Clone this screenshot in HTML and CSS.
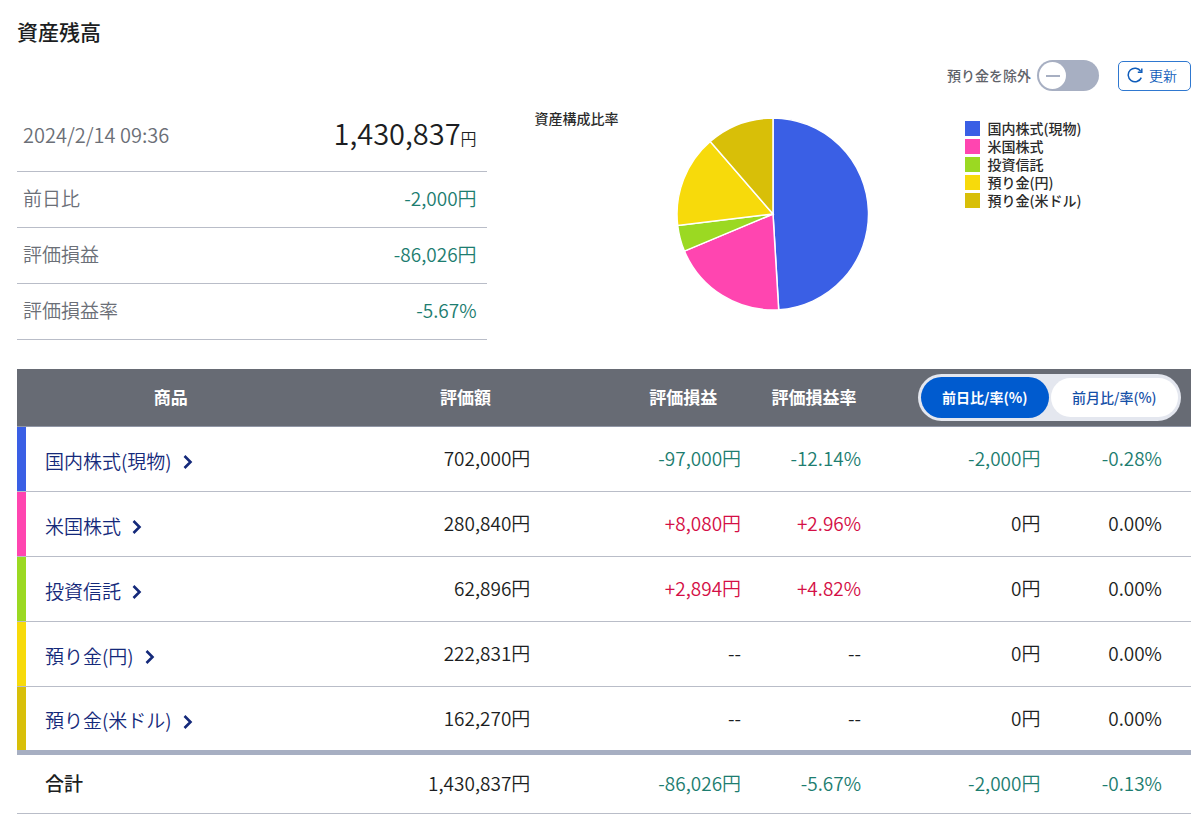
FILE: index.html
```
<!DOCTYPE html>
<html lang="ja">
<head>
<meta charset="utf-8">
<title>資産残高</title>
<meta name="viewport" content="width=device-width, initial-scale=1">
<link rel="stylesheet" href="styles.css">
</head>
<body>
<main class="page">
  <h1 class="page-title">資産残高</h1>

  <div class="toolbar">
    <label class="exclude" for="exclude-cash">預り金を除外</label>
    <input class="switch" type="checkbox" role="switch" id="exclude-cash">
    <button class="refresh" type="button">
      <svg class="refresh-icon" viewBox="0 0 16 16" aria-hidden="true">
        <path d="M13.8 4.4A6.8 6.8 0 1 0 14.3 10.6"/>
        <path d="M14.8 1.4V5.2H10.8"/>
      </svg>
      更新
    </button>
  </div>

  <section class="overview">
    <table class="summary">
      <tbody>
        <tr class="summary-total"><th scope="row">2024/2/14 09:36</th><td>1,430,837<span class="unit">円</span></td></tr>
        <tr><th scope="row">前日比</th><td class="minus">-2,000円</td></tr>
        <tr><th scope="row">評価損益</th><td class="minus">-86,026円</td></tr>
        <tr><th scope="row">評価損益率</th><td class="minus">-5.67%</td></tr>
      </tbody>
    </table>

    <figure class="chart">
      <figcaption class="chart-title">資産構成比率</figcaption>
      <svg class="pie" viewBox="-96 -96 192 192" role="img" aria-label="資産構成比率">
        <path class="fill-domestic" d="M0 0V-96A96 96 0 0 1 5.7 95.8Z"/>
        <path class="fill-us" d="M0 0L5.7 95.8A96 96 0 0 1 -88.6 37.1Z"/>
        <path class="fill-fund" d="M0 0L-88.6 37.1A96 96 0 0 1 -95.3 11.5Z"/>
        <path class="fill-yen" d="M0 0L-95.3 11.5A96 96 0 0 1 -62.8 -72.6Z"/>
        <path class="fill-usd" d="M0 0L-62.8 -72.6A96 96 0 0 1 0 -96Z"/>
      </svg>
      <ul class="legend">
        <li class="domestic">国内株式(現物)</li>
        <li class="us">米国株式</li>
        <li class="fund">投資信託</li>
        <li class="yen">預り金(円)</li>
        <li class="usd">預り金(米ドル)</li>
      </ul>
    </figure>
  </section>

  <table class="holdings">
    <colgroup>
      <col class="col-name"><col class="col-value"><col class="col-gain"><col class="col-rate"><col class="col-change"><col class="col-change-rate">
    </colgroup>
    <thead>
      <tr>
        <th scope="col">商品</th>
        <th scope="col">評価額</th>
        <th scope="col">評価損益</th>
        <th scope="col">評価損益率</th>
        <th scope="colgroup" colspan="2" class="period-cell">
          <div class="period">
            <button class="period-option selected" type="button" aria-pressed="true">前日比/率(%)</button>
            <button class="period-option" type="button" aria-pressed="false">前月比/率(%)</button>
          </div>
        </th>
      </tr>
    </thead>
    <tbody>
      <tr class="domestic">
        <th scope="row"><a class="product" href="#">国内株式(現物)<svg class="chevron" viewBox="0 0 10 14" aria-hidden="true"><path d="M1.5 1L7.5 7L1.5 13"/></svg></a></th>
        <td>702,000円</td><td class="minus">-97,000円</td><td class="minus">-12.14%</td><td class="minus">-2,000円</td><td class="minus">-0.28%</td>
      </tr>
      <tr class="us">
        <th scope="row"><a class="product" href="#">米国株式<svg class="chevron" viewBox="0 0 10 14" aria-hidden="true"><path d="M1.5 1L7.5 7L1.5 13"/></svg></a></th>
        <td>280,840円</td><td class="plus">+8,080円</td><td class="plus">+2.96%</td><td>0円</td><td>0.00%</td>
      </tr>
      <tr class="fund">
        <th scope="row"><a class="product" href="#">投資信託<svg class="chevron" viewBox="0 0 10 14" aria-hidden="true"><path d="M1.5 1L7.5 7L1.5 13"/></svg></a></th>
        <td>62,896円</td><td class="plus">+2,894円</td><td class="plus">+4.82%</td><td>0円</td><td>0.00%</td>
      </tr>
      <tr class="yen">
        <th scope="row"><a class="product" href="#">預り金(円)<svg class="chevron" viewBox="0 0 10 14" aria-hidden="true"><path d="M1.5 1L7.5 7L1.5 13"/></svg></a></th>
        <td>222,831円</td><td>--</td><td>--</td><td>0円</td><td>0.00%</td>
      </tr>
      <tr class="usd">
        <th scope="row"><a class="product" href="#">預り金(米ドル)<svg class="chevron" viewBox="0 0 10 14" aria-hidden="true"><path d="M1.5 1L7.5 7L1.5 13"/></svg></a></th>
        <td>162,270円</td><td>--</td><td>--</td><td>0円</td><td>0.00%</td>
      </tr>
    </tbody>
    <tfoot>
      <tr>
        <th scope="row">合計</th>
        <td>1,430,837円</td><td class="minus">-86,026円</td><td class="minus">-5.67%</td><td class="minus">-2,000円</td><td class="minus">-0.13%</td>
      </tr>
    </tfoot>
  </table>
</main>
</body>
</html>
```
FILE: styles.css
```
:root {
  --text: #1c1e22;
  --muted: #6b6f77;
  --line: #b9bdc8;
  --slate: #a7afc2;
  --green: #1d7d70;
  --red: #d40f46;
  --blue: #005bcf;
  --navy: #14297a;
  --domestic: #3a5fe5;
  --us: #ff45b0;
  --fund: #9bd922;
  --yen: #f7da0b;
  --usd: #d8bf08;
}

* { box-sizing: border-box; }

body {
  margin: 0;
  background: #fff;
  color: var(--text);
  font-family: "Noto Sans CJK JP", sans-serif;
  font-size: 19px;
  font-weight: 350;
  line-height: 28px;
}

button { font-family: inherit; cursor: pointer; }

.page { padding: 15px 9px 10px 17px; }

.page-title {
  margin: 0;
  font-size: 21px;
  font-weight: 500;
  line-height: 32px;
}

.minus { color: var(--green); }
.plus { color: var(--red); }

.domestic { --mark: var(--domestic); }
.us { --mark: var(--us); }
.fund { --mark: var(--fund); }
.yen { --mark: var(--yen); }
.usd { --mark: var(--usd); }

/* Toolbar */
.toolbar {
  display: flex;
  justify-content: flex-end;
  align-items: center;
  margin-top: 13px;
}

.exclude {
  padding-bottom: 2px;
  color: #5f636a;
  font-size: 14px;
  font-weight: 500;
  line-height: 18px;
}

.switch {
  appearance: none;
  display: flex;
  align-items: center;
  width: 62px;
  height: 31px;
  margin: 0 19px 0 6px;
  padding: 2px;
  border-radius: 16px;
  background: var(--slate);
  cursor: pointer;
}

.switch::before {
  content: "";
  width: 27px;
  height: 27px;
  border-radius: 50%;
  background: linear-gradient(var(--slate), var(--slate)) center / 14px 2px no-repeat #fff;
}

.switch:checked { justify-content: flex-end; background: var(--blue); }

.refresh {
  display: flex;
  align-items: center;
  gap: 6px;
  height: 30px;
  padding: 0 13px 1px 8px;
  border: 1px solid #2f78d0;
  border-radius: 5px;
  background: #fff;
  color: #0f5cba;
  font-size: 14px;
  font-weight: 350;
  line-height: 18px;
}

.refresh-icon {
  width: 16px;
  height: 16px;
  fill: none;
  stroke: currentColor;
  stroke-width: 1.5;
}

/* Overview */
.overview {
  display: grid;
  grid-template-columns: 40% 1fr;
  align-items: start;
  margin-top: 7px;
}

.summary { width: 100%; border-spacing: 0; }

.summary th,
.summary td {
  height: 56px;
  padding: 0 10px 3px 6px;
  border-bottom: 1px solid var(--line);
  font-weight: 350;
}

.summary th { color: var(--muted); text-align: left; }
.summary td { text-align: right; }

.summary-total th,
.summary-total td { height: 74px; padding-bottom: 0; }
.summary-total th { font-size: 20px; }
.summary-total td { font-size: 29px; }
.summary .unit { font-size: 16px; }

.chart {
  display: flex;
  align-items: flex-start;
  margin: 0;
  padding: 11px 0 0 48px;
}

.chart-title,
.legend {
  color: #2b2b2b;
  font-size: 14px;
  font-weight: 500;
  line-height: 18px;
}

.pie {
  width: 192px;
  height: 192px;
  margin: 9px 96px 0 58px;
  stroke: #fff;
  stroke-width: 1.5;
}

.fill-domestic { fill: var(--domestic); }
.fill-us { fill: var(--us); }
.fill-fund { fill: var(--fund); }
.fill-yen { fill: var(--yen); }
.fill-usd { fill: var(--usd); }

.legend { margin: 10px 0 0; padding: 0; list-style: none; }

.legend li { display: flex; align-items: center; gap: 8px; }

.legend li::before {
  content: "";
  width: 15px;
  height: 15px;
  background: var(--mark);
}

/* Holdings */
.holdings {
  width: 100%;
  margin-top: 29px;
  border-spacing: 0;
  table-layout: fixed;
}

.col-name { width: 26.2%; }
.col-value { width: 24%; }
.col-gain { width: 13.1%; }
.col-rate { width: 9.2%; }
.col-change { width: 16.3%; }
.col-change-rate { width: 11.2%; }

.holdings thead th {
  height: 58px;
  padding: 0 0 2px;
  border-bottom: 1px solid #9197a6;
  background: #676b74;
  color: #fff;
  font-size: 17px;
  font-weight: 700;
}

.holdings thead .period-cell { padding: 0 10px 0 0; }

.period {
  display: flex;
  gap: 2px;
  align-items: center;
  width: 263px;
  height: 47px;
  margin-left: auto;
  padding: 3px;
  border-radius: 24px;
  background: #e4e7ef;
}

.period-option {
  flex: 1;
  height: 39px;
  padding: 0 0 2px;
  border: 0;
  border-radius: 21px;
  background: #fff;
  color: #1550a8;
  font-size: 14px;
  font-weight: 500;
}

.period-option.selected {
  height: 41px;
  background: var(--blue);
  color: #fff;
  font-weight: 700;
}

.holdings tbody th,
.holdings tbody td {
  height: 65px;
  border-bottom: 1px solid var(--line);
}

.holdings tbody tr:last-child th,
.holdings tbody tr:last-child td {
  height: 68px;
  border-bottom: 5px solid var(--slate);
}

.holdings td { padding: 0 19px 2px 0; text-align: right; }
.holdings td:nth-child(2) { padding-right: 76px; }
.holdings td:nth-child(4) { padding-right: 7px; }
.holdings td:nth-child(6) { padding-right: 29px; }

.holdings tbody th {
  padding: 3px 0 0 28px;
  box-shadow: inset 9px 0 0 var(--mark);
  font-weight: 350;
  text-align: left;
}

.product {
  display: inline-flex;
  align-items: center;
  gap: 11px;
  color: var(--navy);
  text-decoration: none;
}

.chevron {
  width: 10px;
  height: 14px;
  margin-top: 3px;
  fill: none;
  stroke: currentColor;
  stroke-width: 2.6;
}

.holdings tfoot th,
.holdings tfoot td {
  height: 59px;
  border-bottom: 1px solid var(--line);
}

.holdings tfoot th {
  padding: 0 0 2px 28px;
  font-weight: 500;
  text-align: left;
}
```
